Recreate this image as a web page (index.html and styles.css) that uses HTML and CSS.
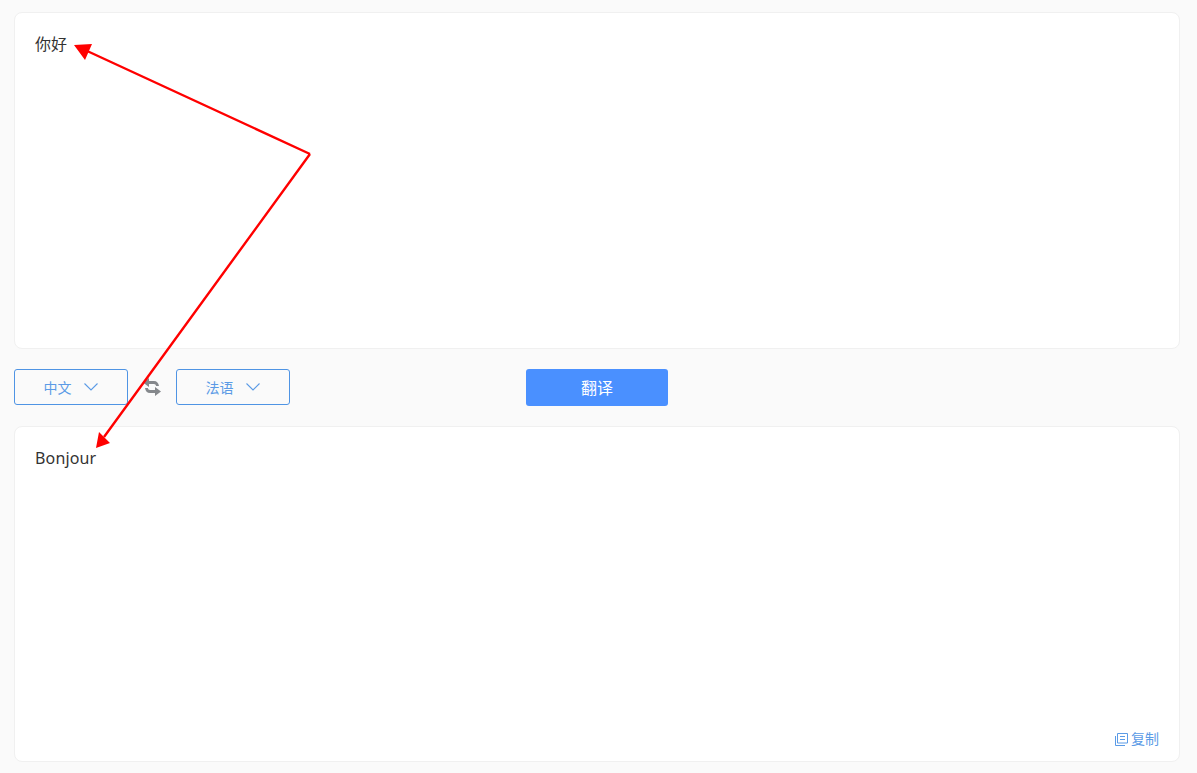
FILE: index.html
```html
<html>
    <head>
        <title>翻译</title>
        <link rel="stylesheet" href="styles.css">
    </head>
    <body>
        <div class="page">
            <div class="blok blok-top">你好</div>
            <div class="panel">
                <div class="langs">
                    <button class="lang">中文
                        <svg class="arrow" width="16" height="10" viewBox="0 0 16 10"><path d="M1.500 1.500L8 8l6.500-6.500" fill="none" stroke="#5b9be6" stroke-width="1.100"/></svg>
                    </button>
                    <svg class="swap" width="20" height="20" viewBox="0 0 20 20"><path d="M7 1L1 5.500 7 10V7h5c1.200 0 1.800.7 2.200 2H17c-.4-3-2.200-5-5-5H7zM13 19l6-4.500L13 10v3H8c-1.200 0-1.800-.7-2.200-2H3c.4 3 2.200 5 5 5h5z" fill="#85888c"/></svg>
                    <button class="lang">法语
                        <svg class="arrow" width="16" height="10" viewBox="0 0 16 10"><path d="M1.500 1.500L8 8l6.500-6.500" fill="none" stroke="#5b9be6" stroke-width="1.100"/></svg>
                    </button>
                </div>
                <button class="go">翻译</button>
            </div>
            <div class="blok blok-bottom">
                <div class="result">Bonjour</div>
                <div class="copy">
                    <svg width="13" height="13" viewBox="0 0 13 13"><path d="M2.500 .5h10v9.500h-10zM.5 3v9.500h9.500M5 3.500h5M5 6.500h5" fill="none" stroke="#5b9be6" stroke-width="1"/></svg>
                    复制
                </div>
            </div>
        </div>
        <svg class="lines" width="1197" height="773" viewBox="0 0 1197 773">
            <path d="M310 154L85 50M310 154L104 437" fill="none" stroke="#ff0000" stroke-width="2.400"/>
            <path d="M74 45L92 44L85 60zM96 448L99 432L110 443z" fill="#ff0000"/>
        </svg>
    </body>
</html>
```

FILE: styles.css
```css
body {
        margin: 0;
        background-color: #fafafa;
        color: #333;
        font-family: "Noto Sans", "Noto Sans CJK SC", sans-serif;}

.page {
        height: 773px;
        box-sizing: border-box;
        padding: 12px 17px 11px 14px;
        display: flex;
        flex-direction: column;}

.blok {
        background: #fff;
        border: 1px solid #f0f0f0;
        border-radius: 8px;
        box-sizing: border-box;
        padding: 20px;
        font-size: 16px;
        line-height: 22px;}

.blok-top {height: 337px;}

.blok-bottom {
        height: 336px;
        display: flex;
        flex-direction: column;
        justify-content: space-between;}

.result {letter-spacing: 0.15px;}

.panel {
        height: 77px;
        box-sizing: border-box;
        padding-bottom: 1px;
        display: flex;
        align-items: center;}

.langs {
        width: 512px;
        display: flex;
        align-items: center;}

.lang {
        width: 114px;
        height: 36px;
        background: transparent;
        border: 1px solid #4f94e4;
        border-radius: 3px;
        color: #5b9be6;
        font-family: inherit;
        font-size: 14px;
        display: flex;
        align-items: center;
        justify-content: center;
        gap: 11px;
        padding: 0;}

.swap {margin: 0 14px;}

.go {
        width: 142px;
        height: 37px;
        background-color: #4a90ff;
        color: #fff;
        border: none;
        border-radius: 3px;
        font-family: inherit;
        font-size: 16px;}

.copy {
        align-self: flex-end;
        color: #5b9be6;
        font-size: 14px;
        line-height: 18px;
        display: flex;
        align-items: center;
        gap: 3px;
        margin-bottom: -7px;}

.lines {
        position: absolute;
        left: 0;
        top: 0;}
```
